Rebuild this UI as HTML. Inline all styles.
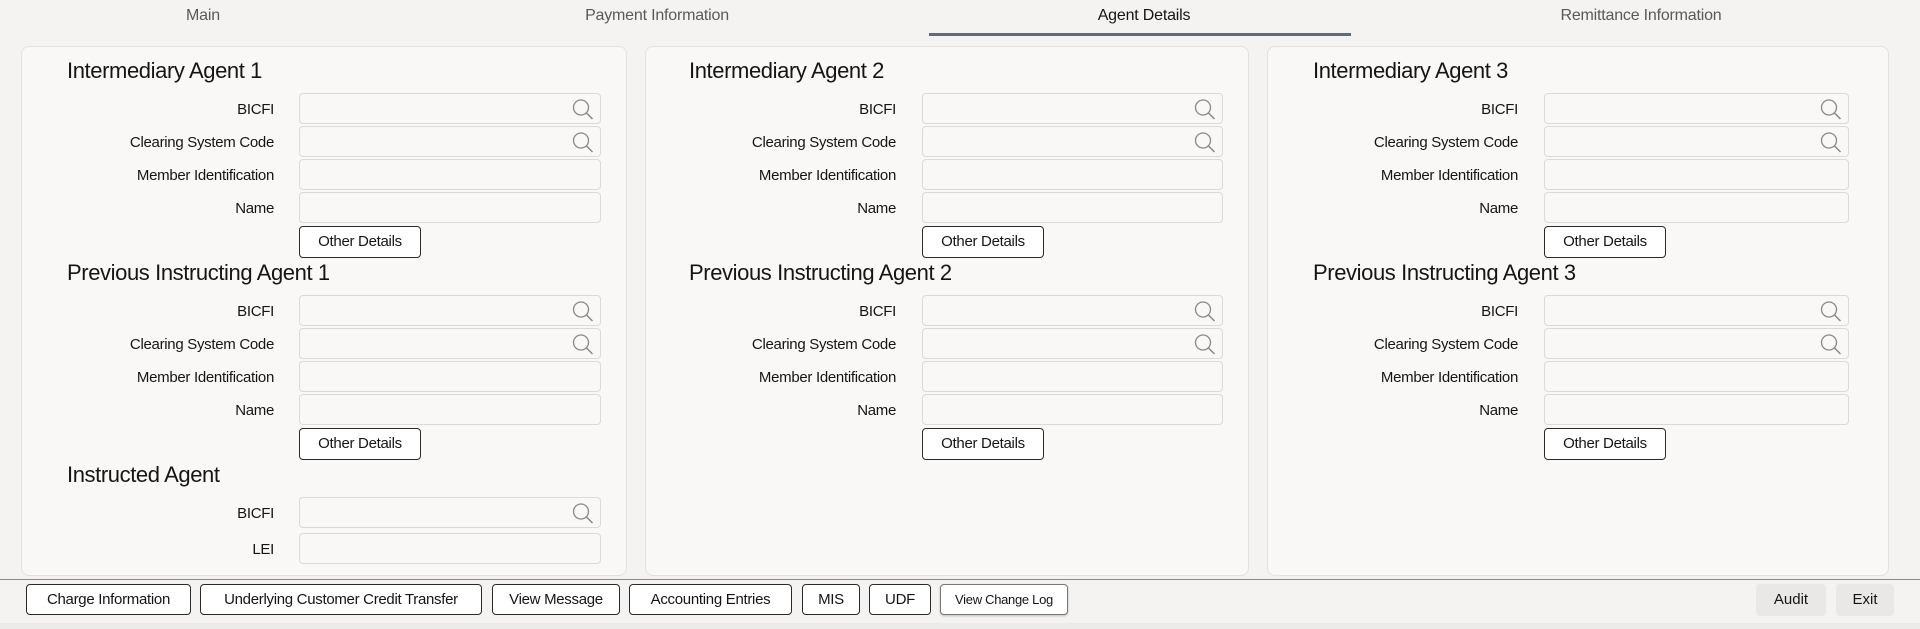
<!DOCTYPE html>
<html><head><meta charset="utf-8"><style>
*{box-sizing:border-box;margin:0;padding:0}
body{width:1920px;height:629px;overflow:hidden;background:#f4f3f1;font-family:"Liberation Sans",sans-serif;color:#161513;position:relative}
.tab{position:absolute;top:7px;font-size:16px;color:#5a5955;transform:translateX(-50%);white-space:nowrap;letter-spacing:-0.2px}
.tab.act{color:#161513}
.ul{position:absolute;left:929px;top:33px;width:422px;height:3px;background:#5d6b82}
.panel{position:absolute;top:46px;height:530px;background:#f9f8f6;border:1px solid #e3e1dd;border-radius:8px}
.h{position:absolute;font-size:22px;color:#161513;white-space:nowrap;letter-spacing:-0.4px}
.l{position:absolute;font-size:15px;text-align:right;white-space:nowrap;letter-spacing:-0.3px}
.in{position:absolute;height:31px;border:1px solid #dcdad6;border-radius:4px;background:#f9f8f6}
.in svg{position:absolute;right:5px;top:4px}
.ob{position:absolute;height:32px;width:122px;border:1px solid #2b2a28;border-radius:4px;background:#fff;font-size:15px;text-align:center;line-height:30px;letter-spacing:-0.3px}
.line{position:absolute;left:0;top:579px;width:1920px;height:1px;background:#8a8985}
.fb{position:absolute;top:584px;height:31px;border:1px solid #2b2a28;border-radius:4px;background:#fff;font-size:15px;text-align:center;line-height:29px;white-space:nowrap;letter-spacing:-0.3px}
.gb{position:absolute;top:584px;height:32px;border-radius:4px;background:#e9e8e6;font-size:15px;text-align:center;line-height:32px}
.band{position:absolute;left:0;top:623px;width:1920px;height:6px;background:#ecebe9}
</style></head><body>
<div class="tab" style="left:203px">Main</div>
<div class="tab" style="left:657px">Payment Information</div>
<div class="tab act" style="left:1144px">Agent Details</div>
<div class="tab" style="left:1641px">Remittance Information</div>
<div class="ul"></div>

<div class="panel" style="left:21px;width:606px"></div>
<div class="panel" style="left:645px;width:604px"></div>
<div class="panel" style="left:1267px;width:622px"></div>

<div id="c"></div>

<div class="line"></div>
<div class="fb" style="left:26px;width:165px">Charge Information</div>
<div class="fb" style="left:200px;width:282px">Underlying Customer Credit Transfer</div>
<div class="fb" style="left:492px;width:128px">View Message</div>
<div class="fb" style="left:629px;width:163px">Accounting Entries</div>
<div class="fb" style="left:802px;width:58px">MIS</div>
<div class="fb" style="left:869px;width:62px">UDF</div>
<div class="fb" style="left:940px;width:128px;font-size:13px;border-color:#777;box-shadow:0 1px 2px #bbb">View Change Log</div>
<div class="gb" style="left:1756px;width:70px">Audit</div>
<div class="gb" style="left:1836px;width:58px">Exit</div>
<div class="band"></div>

<script>
var cols=[{h:67,lr:274,il:299,ir:601,three:true},{h:689,lr:896,il:922,ir:1223},{h:1313,lr:1518,il:1544,ir:1849}];
var mag='<svg width="24" height="24" viewBox="0 0 24 24"><circle cx="10" cy="9.5" r="7.5" fill="none" stroke="#8a8884" stroke-width="1.3"/><line x1="15.5" y1="15" x2="21.5" y2="21" stroke="#8a8884" stroke-width="1.5"/></svg>';
var out='';
function row(c,y,label,search){
 out+='<div class="l" style="left:'+(c.lr-250)+'px;width:250px;top:'+(y-8)+'px">'+label+'</div>';
 out+='<div class="in" style="left:'+c.il+'px;width:'+(c.ir-c.il)+'px;top:'+(y-16)+'px">'+(search?mag:'')+'</div>';
}
cols.forEach(function(c,i){
 var n=i+1;
 var secs=[{hy:70,t:'Intermediary Agent '+n,y:109},{hy:272,t:'Previous Instructing Agent '+n,y:311}];
 secs.forEach(function(s){
  out+='<div class="h" style="left:'+c.h+'px;top:'+(s.hy-12)+'px">'+s.t+'</div>';
  row(c,s.y,'BICFI',1);row(c,s.y+33,'Clearing System Code',1);row(c,s.y+66,'Member Identification',0);row(c,s.y+99,'Name',0);
  out+='<div class="ob" style="left:'+c.il+'px;top:'+(s.y+117)+'px">Other Details</div>';
 });
 if(c.three){
  out+='<div class="h" style="left:'+c.h+'px;top:462px">Instructed Agent</div>';
  row(c,513,'BICFI',1);row(c,549,'LEI',0);
 }
});
document.getElementById('c').innerHTML=out;
</script>
</body></html>
